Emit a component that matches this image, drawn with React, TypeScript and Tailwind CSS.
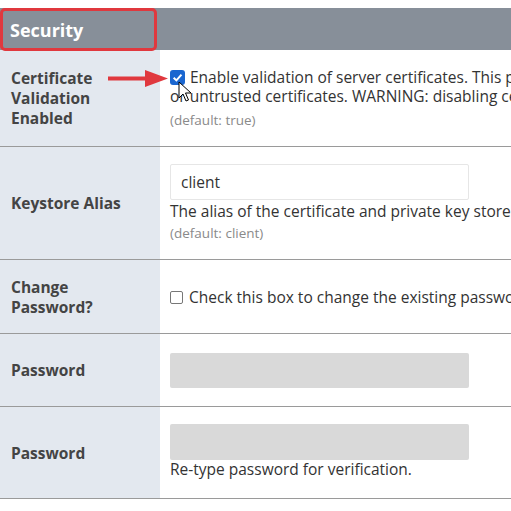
import React from "react";

const font = { fontFamily: '"Open Sans", "Noto Sans", sans-serif' };

function Row({ label, children, h, pt }: { label: React.ReactNode; children: React.ReactNode; h: string; pt: string }) {
  return (
    <div className={`flex border-b border-[#9a9a9a] ${h}`}>
      <div className="w-[160px] shrink-0 bg-[#e3e8ef] flex items-center pl-[11px] text-[15.5px] leading-[20px] font-bold text-[#444]">
        {label}
      </div>
      <div className={`flex-1 bg-white flex flex-col px-[10px] ${pt}`}>{children}</div>
    </div>
  );
}

function Arrow() {
  return (
    <svg className="absolute left-[108px] top-[69px]" width="62" height="19" viewBox="0 0 62 19">
      <rect x="0" y="7.5" width="40" height="4" fill="#e0383e" />
      <polygon points="37,1 60,9.5 37,18" fill="#e0383e" />
    </svg>
  );
}

function Cursor() {
  return (
    <svg className="absolute left-[178px] top-[81px]" width="14" height="22" viewBox="0 0 14 22">
      <path d="M1 1 L1 17 L5 13 L8 20 L10.5 19 L7.5 12 L13 12 Z" fill="white" stroke="black" strokeWidth="1" strokeLinejoin="round" />
    </svg>
  );
}

export default function App() {
  return (
    <div className="relative w-[511px] h-[511px] overflow-hidden bg-white text-[#333]" style={font}>
      <div className="w-[760px] pt-[8px]">
        <div className="flex h-[42px] bg-[#878f99]">
          <div className="relative w-[160px] flex items-center pl-[10px] pt-[2px] text-white font-bold text-[18px]">
            Security
            <div className="absolute left-0 top-0 w-[157px] h-[43px] border-[3px] border-[#e0383e] rounded-[5px]" />
          </div>
        </div>
        <Row h="h-[97px]" pt="pt-[18px]" label={<div>Certificate<br />Validation<br />Enabled</div>}>
          <div className="text-[15.5px] leading-[19px] whitespace-nowrap">
            <div className="flex items-center">
              <span className="w-[15px] h-[15px] rounded-[3px] bg-[#1a66d0] flex items-center justify-center mr-[5px]">
                <svg width="11" height="11" viewBox="0 0 10 10">
                  <path d="M1.5 5.2 L4 7.6 L8.6 2.4" fill="none" stroke="white" strokeWidth="1.8" />
                </svg>
              </span>
              Enable validation of server certificates. This prevents connecting to servers with invalid
            </div>
            <div>or untrusted certificates. WARNING: disabling certificate validation is insecure.</div>
            <div className="text-[13.5px] leading-[16px] text-[#8a8a8a] mt-[6px]">(default: true)</div>
          </div>
        </Row>
        <Row h="h-[113px]" pt="pt-[17px]" label="Keystore Alias">
          <div className="w-[299px] h-[36px] border border-[#e6e6e6] rounded-[2px] flex items-center pl-[10px] pt-[1px] text-[15.5px]">client</div>
          <div className="text-[15.5px] leading-[20px] whitespace-nowrap mt-[1px]">The alias of the certificate and private key stored in the keystore.</div>
          <div className="text-[13.5px] leading-[16px] text-[#8a8a8a] mt-[4px]">(default: client)</div>
        </Row>
        <Row h="h-[74px]" pt="pt-[27px]" label={<div>Change<br />Password?</div>}>
          <div className="flex items-center text-[15.5px] leading-[20px] whitespace-nowrap">
            <span className="w-[13px] h-[13px] border border-[#777] rounded-[2px] bg-white mr-[6px]" />
            Check this box to change the existing password.
          </div>
        </Row>
        <Row h="h-[73px]" pt="pt-[19px]" label="Password">
          <div className="w-[299px] h-[35px] bg-[#d9d9d9] rounded-[2px]" />
        </Row>
        <Row h="h-[92px]" pt="pt-[17px]" label="Password">
          <div className="w-[299px] h-[36px] bg-[#d9d9d9] rounded-[2px]" />
          <div className="text-[15.5px] leading-[20px] whitespace-nowrap -mt-[1px]">Re-type password for verification.</div>
        </Row>
      </div>
      <Arrow />
      <Cursor />
    </div>
  );
}
